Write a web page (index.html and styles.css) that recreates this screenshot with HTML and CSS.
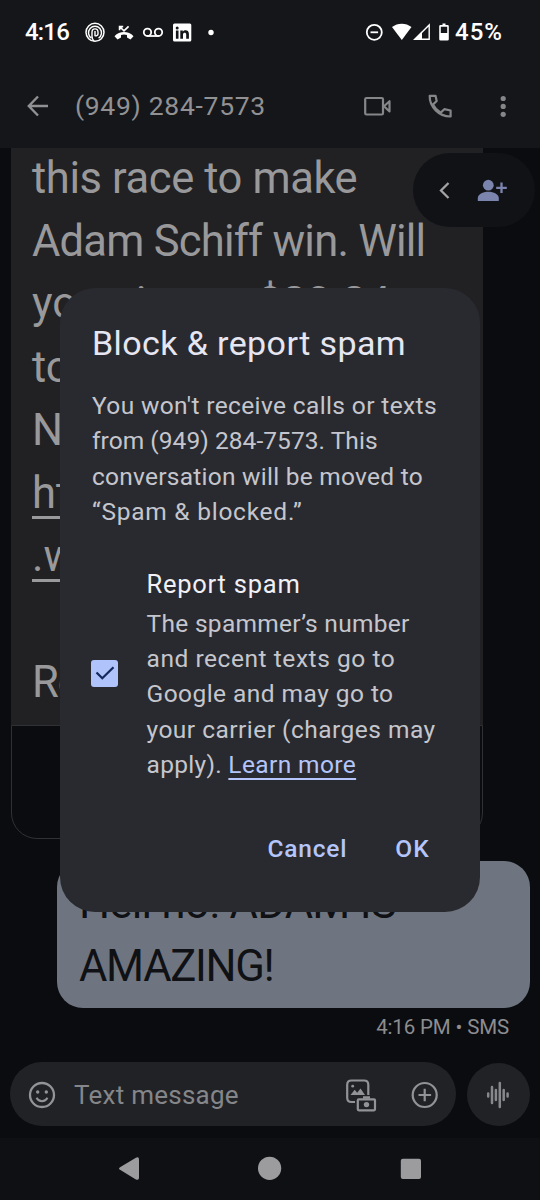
FILE: index.html
```html
<!DOCTYPE html>
<html lang="en">
<head>
<meta charset="utf-8">
<title>Messages</title>
<link rel="stylesheet" href="styles.css">
</head>
<body>
<div class="screen">
  <header class="top">
    <div class="status">
      <span class="clock">4:16</span>
      <svg class="status-left" width="130" height="24" viewBox="84 20 130 24">
        <g fill="none" stroke="#fff">
          <circle cx="95" cy="32.300" r="9" stroke-width="1.500"/>
          <path d="M91.400 38.200a6.500 6.500 0 1 1 7.200 0" stroke-width="1.400"/>
          <path d="M92 37.500v-5.200a3 3.400 0 0 1 6 0v1.800a2 2 0 0 1-3.200 1.300M95 31v5.200M92 36.500c0 2 .8 3.300 2 4.500" stroke-width="1.400"/>
          <path d="M119.600 30.200v-3.600h3.600M120 27l4 3.800 4.600-4.400" stroke-width="1.700"/>
          <circle cx="147.500" cy="32.300" r="3.700" stroke-width="1.800"/>
          <circle cx="158.500" cy="32.300" r="3.700" stroke-width="1.800"/>
          <path d="M147.500 36h11" stroke-width="1.800"/>
        </g>
        <path fill="#fff" d="M114.500 36.300C117 33.200 120.500 32 124 32s7 1.200 9.500 4.300l-3 3.200-3.500-2v-2.600a10 10 0 0 0-6 0v2.600l-3.500 2z"/>
        <rect x="173" y="23.500" width="18.300" height="18" rx="1.500" fill="#fff"/>
        <g fill="#15161a"><circle cx="177.200" cy="28" r="1.500"/><path d="M175.900 30.500h2.600v8.200h-2.600zM180.300 30.500h2.500v1.200c1.600-2.300 6.100-2 6.100 2v5h-2.700v-4.300c0-2.400-3.200-2.200-3.200 0v4.300h-2.700z"/></g>
        <circle cx="211" cy="32.500" r="2.700" fill="#fff"/>
      </svg>
      <svg class="status-right" width="86" height="24" viewBox="364 20 86 24">
        <circle cx="374.300" cy="32.300" r="7.500" fill="none" stroke="#fff" stroke-width="1.800"/>
        <path d="M370.500 32.300h7.600" stroke="#fff" stroke-width="1.800"/>
        <path d="M392 27c5.500-4.500 14-4.500 19.500 0l-9.700 13z" fill="#fff"/>
        <path d="M414.800 39.300L429.200 25v14.300z" fill="none" stroke="#fff" stroke-width="1.400"/>
        <path d="M413.500 40l8.500-8.500V40z" fill="#fff"/>
        <path d="M440.500 25h2v-1.500h3V25h2q1.300 0 1.300 1.300v13q0 1.300-1.300 1.300h-7q-1.300 0-1.300-1.300v-13q0-1.300 1.300-1.300zM440.800 26.800v6.200h6.400v-6.200z" fill="#fff" fill-rule="evenodd"/>
      </svg>
      <span class="battery">45%</span>
    </div>
    <div class="appbar">
      <svg class="back" width="22" height="22" viewBox="0 0 22 22"><path d="M21 11H2M11 1.500L1.800 11l9.200 9.500" fill="none" stroke="#919193" stroke-width="2.400"/></svg>
      <h1 class="contact">(949) 284-7573</h1>
      <svg width="150" height="28" viewBox="362 92 150 28">
        <g fill="none" stroke="#858688" stroke-width="2.200" stroke-linejoin="round">
          <rect x="365.200" y="98" width="17.800" height="16.500" rx="1.300"/>
          <path d="M384 106.200l5.500-5v10.300z"/>
          <path d="M429.700 95.800h5.800l1.200 5.200-3.800 3.600c2 4 4.200 6 7.800 8l3.600-3.400 6.300 1.300v6c-11.500.2-21.200-9.700-20.900-20.700z"/>
        </g>
        <g fill="#858688"><circle cx="503.200" cy="98.500" r="2.600"/><circle cx="503.200" cy="106.400" r="2.600"/><circle cx="503.200" cy="114.300" r="2.600"/></g>
      </svg>
    </div>
  </header>

  <main class="thread">
    <div class="incoming">
      <div class="incoming-text">
        <div class="t1">this race to make</div>
        <div class="t2">Adam Schiff win. Will</div>
        <div class="t3">you give us <span class="amount">$20.24</span></div>
        <div>to</div>
        <div>N</div>
        <div class="url">htt</div>
        <div class="url">.w</div>
        <div class="gap"></div>
        <div class="t9">Re</div>
      </div>
      <div class="preview"></div>
    </div>
    <div class="outgoing">
      <div class="o1">Hell no! ADAM IS</div>
      <div class="o2">AMAZING!</div>
    </div>
    <div class="stamp">4:16 PM • SMS</div>
    <div class="add-pill">
      <svg width="66" height="26" viewBox="438 177 66 26">
        <path d="M448.500 183l-7.500 7.500 7.500 7.500" fill="none" stroke="#a3a3a5" stroke-width="2.300"/>
        <g fill="#7a84ad"><circle cx="488.300" cy="185.200" r="5.400"/><path d="M477.800 201v-2.800c0-3.800 5-6.400 10.500-6.400s10.500 2.600 10.500 6.400v2.800z"/></g>
        <path d="M496.200 187.800h10.600M501.500 182.500v10.600" stroke="#7a84ad" stroke-width="2.300"/>
      </svg>
    </div>
  </main>

  <div class="composer">
    <div class="field">
      <svg width="28" height="28" viewBox="0 0 28 28"><circle cx="14" cy="15" r="12" fill="none" stroke="#939498" stroke-width="2.300"/><circle cx="9.700" cy="12" r="1.700" fill="#939498"/><circle cx="18.300" cy="12" r="1.700" fill="#939498"/><path d="M8.500 17.800c2.500 4.600 8.500 4.600 11 0" fill="none" stroke="#939498" stroke-width="2"/></svg>
      <span class="placeholder">Text message</span>
      <svg width="96" height="34" viewBox="345 1077 96 34">
        <g fill="none" stroke="#929397" stroke-width="2.200">
          <path d="M355 1102h-3.500q-4.300 0-4.300-4.300v-12.900q0-4.300 4.300-4.300h12.500q4.300 0 4.300 4.300V1095"/>
          <rect x="357.800" y="1099.300" width="17.200" height="11" rx="1"/>
          <circle cx="424.700" cy="1095" r="12"/>
          <path d="M418.500 1095h12.600M424.700 1088.800v12.500"/>
        </g>
        <g fill="#929397"><path d="M350.500 1095l4.200-5.300 2.500 3 3.300-4.200 4.500 6.500zM363 1096.300h7v2.500h-7z"/><circle cx="352.700" cy="1086.200" r="1.400"/><circle cx="366.500" cy="1104.600" r="2.700"/></g>
      </svg>
    </div>
    <div class="voice">
      <svg width="24" height="28" viewBox="0 0 24 28"><path d="M2.200 12.500v3M6 6v16M9.900 9v10M13.800 2v24M17.700 9v10M21.600 12.500v3" transform="translate(-1 0)" stroke="#87888b" stroke-width="2.500" stroke-linecap="round"/></svg>
    </div>
  </div>

  <nav class="navbar">
    <svg width="304" height="26" viewBox="118 1155 304 26" fill="#9c9c9e">
      <path d="M120 1169.800q-2-1.300 0-2.600l15.500-9.300q3.500-1.800 3.500 1.500v18.300q0 3.300-3.500 1.500z"/>
      <circle cx="269.600" cy="1168.300" r="11.600"/>
      <rect x="400.800" y="1158.800" width="20.200" height="20.200" rx="2"/>
    </svg>
  </nav>

  <section class="dialog">
    <h2 class="title">Block &amp; report spam</h2>
    <div class="body">
      <div class="b1">You won't receive calls or texts</div>
      <div class="b2">from (949) 284-7573. This</div>
      <div class="b3">conversation will be moved to</div>
      <div class="b4">“Spam &amp; blocked.”</div>
    </div>
    <div class="option">
      <div class="checkbox"><svg width="20" height="14" viewBox="0 0 20 14"><path d="M1.500 6.500l5.800 5.700L18.500 1.300" fill="none" stroke="#17285c" stroke-width="2.300"/></svg></div>
      <div class="option-text">
        <div class="option-title">Report spam</div>
        <div class="r1">The spammer’s number</div>
        <div class="r2">and recent texts go to</div>
        <div class="r3">Google and may go to</div>
        <div class="r4">your carrier (charges may</div>
        <div class="r5">apply). <a class="more">Learn more</a></div>
      </div>
    </div>
    <div class="actions"><span class="cancel">Cancel</span><span class="ok">OK</span></div>
  </section>
</div>
</body>
</html>
```
FILE: styles.css
```css
* { box-sizing: border-box; }
body { margin: 0; background: #0b0c10; font-family: Roboto, "Liberation Sans", sans-serif; }
h1, h2 { margin: 0; font-weight: 400; }
svg { display: block; flex: none; overflow: visible; }
.screen { position: relative; width: 540px; height: 1200px; overflow: hidden; display: flex; flex-direction: column; background: #0b0c10; white-space: nowrap; }

.top { height: 148px; flex: none; background: #15161a; }
.status { height: 64px; display: flex; align-items: center; padding-left: 25px; color: #fff; font-size: 24px; font-weight: 500; }
.clock { width: 59px; letter-spacing: -.8px; }
.status-right { margin-left: 150px; }
.battery { margin-left: 5px; letter-spacing: 1px; }
.appbar { height: 84px; display: flex; align-items: center; padding-left: 27px; }
.contact { width: 287px; margin: -2px 0 0 26px; font-size: 26.5px; letter-spacing: .7px; color: #919193; }

.thread { position: relative; height: 914px; flex: none; display: flex; flex-direction: column; overflow: hidden; }
.incoming { width: 472px; height: 691px; margin-left: 11px; display: flex; flex-direction: column; }
.incoming-text { height: 577px; background: #212123; padding-left: 21px; overflow: hidden; font-size: 43.5px; line-height: 63px; color: #99999b; }
.t1 { margin-top: -1px; letter-spacing: -.4px; }
.t2 { letter-spacing: -.77px; }
.t3 { margin: -1px 0 1px; letter-spacing: -.1px; }
.t9 { letter-spacing: -1px; }
.amount { margin-left: 0; }
.url { text-decoration: underline; text-decoration-thickness: 3px; text-underline-offset: 8px; }
.gap { height: 63px; }
.preview { flex: 1; border: 1px solid #303134; border-radius: 0 0 26px 26px; }
.outgoing { width: 473px; height: 147px; margin: 22px 0 0 57px; padding: 11px 0 0 22px; border-radius: 26px; background: #6f7580; color: #101114; font-size: 43.5px; line-height: 63px; }
.o1 { letter-spacing: -.7px; }
.o2 { letter-spacing: -1.3px; }
.stamp { margin: 7px 31px 0 0; text-align: right; font-size: 20.5px; line-height: 24px; letter-spacing: -.15px; color: #8d8d90; }
.add-pill { position: absolute; left: 413px; top: 5px; width: 122px; height: 74px; border-radius: 37px; background: #111216; padding: 24px 0 0 25px; }

.composer { height: 76px; flex: none; display: flex; padding-left: 10px; gap: 11px; }
.field { width: 446px; height: 64px; border-radius: 32px; background: #212226; display: flex; align-items: center; padding-left: 18px; }
.placeholder { width: 271px; margin: 2px 0 0 18px; font-size: 26px; letter-spacing: .25px; color: #85868a; }
.voice { width: 63px; height: 63px; margin-top: 1px; border-radius: 50%; background: #212226; display: flex; align-items: center; justify-content: center; }
.navbar { flex: 1; background: #0f1013; padding: 17px 0 0 118px; }

.dialog { position: absolute; left: 60px; top: 288px; width: 420px; height: 624px; border-radius: 35px; background: #292a2f; padding: 35px 0 0 32px; color: #c5c6cd; font-size: 24.5px; line-height: 35.4px; }
.title { font-size: 34px; line-height: 40px; letter-spacing: .4px; color: #e6e6f2; }
.body { margin-top: 25px; }
.b1 { letter-spacing: .37px; }
.b2 { letter-spacing: .05px; }
.b3 { letter-spacing: .25px; }
.b4 { letter-spacing: .75px; }
.option { display: flex; margin: 34px 0 0 -1px; }
.checkbox { width: 27px; height: 27px; margin-top: 96px; border-radius: 3px; background: #b0c4fb; display: flex; align-items: center; justify-content: center; }
.option-text { margin-left: 28.5px; }
.option-title { margin-bottom: 2px; font-size: 25.5px; line-height: 40px; letter-spacing: .75px; color: #f0f0f6; }
.r1 { letter-spacing: .3px; }
.r2 { letter-spacing: .55px; }
.r3 { letter-spacing: .45px; }
.r4 { letter-spacing: .48px; }
.r5 { letter-spacing: .3px; }
.more { color: #b4c5fb; letter-spacing: .38px; text-decoration: underline; text-decoration-thickness: 2px; text-underline-offset: 5px; text-decoration-skip-ink: none; }
.actions { display: flex; justify-content: flex-end; gap: 47px; padding-right: 50px; margin-top: 48px; font-weight: 500; color: #b4c5fb; }
.cancel { letter-spacing: .8px; margin-right: 1px; }
.ok { letter-spacing: 1.2px; }
```
